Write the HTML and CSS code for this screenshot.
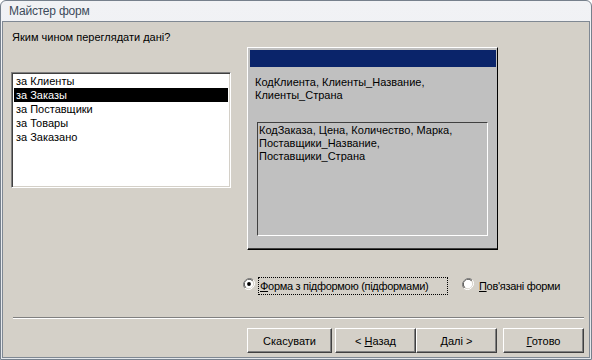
FILE: index.html
```html
<!DOCTYPE html>
<html lang="uk">
<head>
    <meta charset="UTF-8">
    <title>Майстер форм</title>
    <link rel="stylesheet" href="styles.css">
</head>
<body>
    <div class="window">
        <div class="titlebar">Майстер форм</div>
        <div class="client">
            <p class="prompt">Яким чином переглядати дані?</p>

            <div class="main">
                <ul class="listbox">
                    <li>за Клиенты</li>
                    <li class="selected">за Заказы</li>
                    <li>за Поставщики</li>
                    <li>за Товары</li>
                    <li>за Заказано</li>
                </ul>

                <div class="preview">
                    <div class="preview-bar"></div>
                    <div class="preview-fields">КодКлиента, Клиенты_Название,<br>Клиенты_Страна</div>
                    <div class="subform">КодЗаказа, Цена, Количество, Марка,<br>Поставщики_Название,<br>Поставщики_Страна</div>
                </div>
            </div>

            <div class="options">
                <label class="option">
                    <svg class="radio" width="12" height="12" viewBox="0 0 12 12">
                        <path d="M10.2 1.8A6 6 0 0 0 1.8 10.2" fill="none" stroke="#808080" stroke-width="1"/>
                        <path d="M9.5 2.5A5 5 0 0 0 2.5 9.5" fill="none" stroke="#404040" stroke-width="1"/>
                        <path d="M1.8 10.2A6 6 0 0 0 10.2 1.8" fill="none" stroke="#ffffff" stroke-width="1"/>
                        <circle cx="6" cy="6" r="4.2" fill="#ffffff"/>
                        <circle cx="6" cy="6" r="1.9" fill="#000000"/>
                    </svg>
                    <span class="option-text focused"><u>Ф</u>орма з підформою (підформами)</span>
                </label>
                <label class="option second">
                    <svg class="radio" width="12" height="12" viewBox="0 0 12 12">
                        <path d="M10.2 1.8A6 6 0 0 0 1.8 10.2" fill="none" stroke="#808080" stroke-width="1"/>
                        <path d="M9.5 2.5A5 5 0 0 0 2.5 9.5" fill="none" stroke="#404040" stroke-width="1"/>
                        <path d="M1.8 10.2A6 6 0 0 0 10.2 1.8" fill="none" stroke="#ffffff" stroke-width="1"/>
                        <circle cx="6" cy="6" r="4.2" fill="#ffffff"/>
                    </svg>
                    <span class="option-text"><u>П</u>ов'язані форми</span>
                </label>
            </div>

            <div class="separator"></div>

            <div class="buttons">
                <button class="btn cancel">Скасувати</button>
                <button class="btn back">&lt; <u>Н</u>азад</button>
                <button class="btn"><u>Д</u>алі &gt;</button>
                <button class="btn finish"><u>Г</u>отово</button>
            </div>
        </div>
    </div>
</body>
</html>
```

FILE: styles.css
```css
* {
    box-sizing: border-box;
}

body {
    margin: 0;
    width: 592px;
    height: 360px;
    overflow: hidden;
    font-family: "Liberation Sans", Arial, sans-serif;
    font-size: 11px;
    color: #000;
}

.window {
    width: 592px;
    height: 360px;
    border: 1px solid #76808c;
    border-radius: 6px 6px 0 0;
    background: linear-gradient(#f1f2f5, #e4e7eb);
    padding: 0 1px 1px;
    display: flex;
    flex-direction: column;
}

.titlebar {
    height: 20px;
    padding-left: 7px;
    line-height: 21px;
    font-size: 12px;
    letter-spacing: -0.2px;
    color: #3d4b5b;
}

.client {
    flex: 1;
    border: 1px solid #7f8893;
    background-color: #d4d0c8;
    display: flex;
    flex-direction: column;
}

.prompt {
    margin: 0;
    padding: 8px 0 0 9px;
    line-height: 14px;
}

.main {
    display: flex;
    align-items: flex-start;
    margin-top: 3px;
}

/* список джерел */
.listbox {
    list-style: none;
    margin: 25px 0 0 8px;
    padding: 1px 1px 0;
    width: 220px;
    height: 116px;
    background-color: #fff;
    border: 1px solid;
    border-color: #808080 #fff #fff #808080;
    box-shadow: inset 1px 1px 0 #404040, inset -1px -1px 0 #d4d0c8;
}

.listbox li {
    height: 14px;
    line-height: 14px;
    padding-left: 2px;
    margin: 0 1px;
}

.listbox .selected {
    background-color: #000;
    color: #fff;
}

/* схема форми */
.preview {
    margin-left: 16px;
    width: 251px;
    height: 203px;
    background-color: #c0c0c0;
    border: 1px solid;
    border-color: #fff #000 #000 #fff;
    box-shadow: inset 0 -1px 0 #404040;
    padding: 2px 1px 0 2px;
}

.preview-bar {
    height: 17px;
    background-color: #0a246a;
}

.preview-fields {
    margin-top: 9px;
    padding-left: 5px;
    line-height: 13px;
}

.subform {
    margin: 20px 0 0 7px;
    width: 231px;
    height: 114px;
    border: 1px solid;
    border-color: #404040 #fff #fff #404040;
    padding: 1px 0 0 1px;
    line-height: 13px;
}

/* перемикачі */
.options {
    display: flex;
    align-items: flex-start;
    margin-top: 27px;
    padding-left: 240px;
    height: 18px;
}

.option {
    display: flex;
    align-items: flex-start;
}

.option.second {
    margin-left: 14px;
}

.radio {
    display: block;
    margin-top: 1px;
}

.option-text {
    margin-left: 3px;
    height: 18px;
    line-height: 16px;
    padding-left: 1px;
    letter-spacing: -0.3px;
    border: 1px solid transparent;
}

.option-text.focused {
    width: 190px;
    border: 1px dotted #000;
}

.separator {
    margin: 22px 5px 0 10px;
    height: 2px;
    border-top: 1px solid #808080;
    border-bottom: 1px solid #fff;
}

/* кнопки */
.buttons {
    display: flex;
    justify-content: flex-end;
    margin-top: 9px;
    padding-right: 5px;
}

.btn {
    width: 81px;
    height: 25px;
    padding: 0;
    font-family: inherit;
    font-size: 11px;
    color: #000;
    background-color: #d4d0c8;
    border: 1px solid;
    border-color: #fff #404040 #404040 #fff;
    box-shadow: inset -1px -1px 0 #808080;
    border-radius: 0;
}

.btn.cancel {
    width: 85px;
    margin-right: 3px;
}

.btn.finish {
    margin-left: 6px;
}
```
